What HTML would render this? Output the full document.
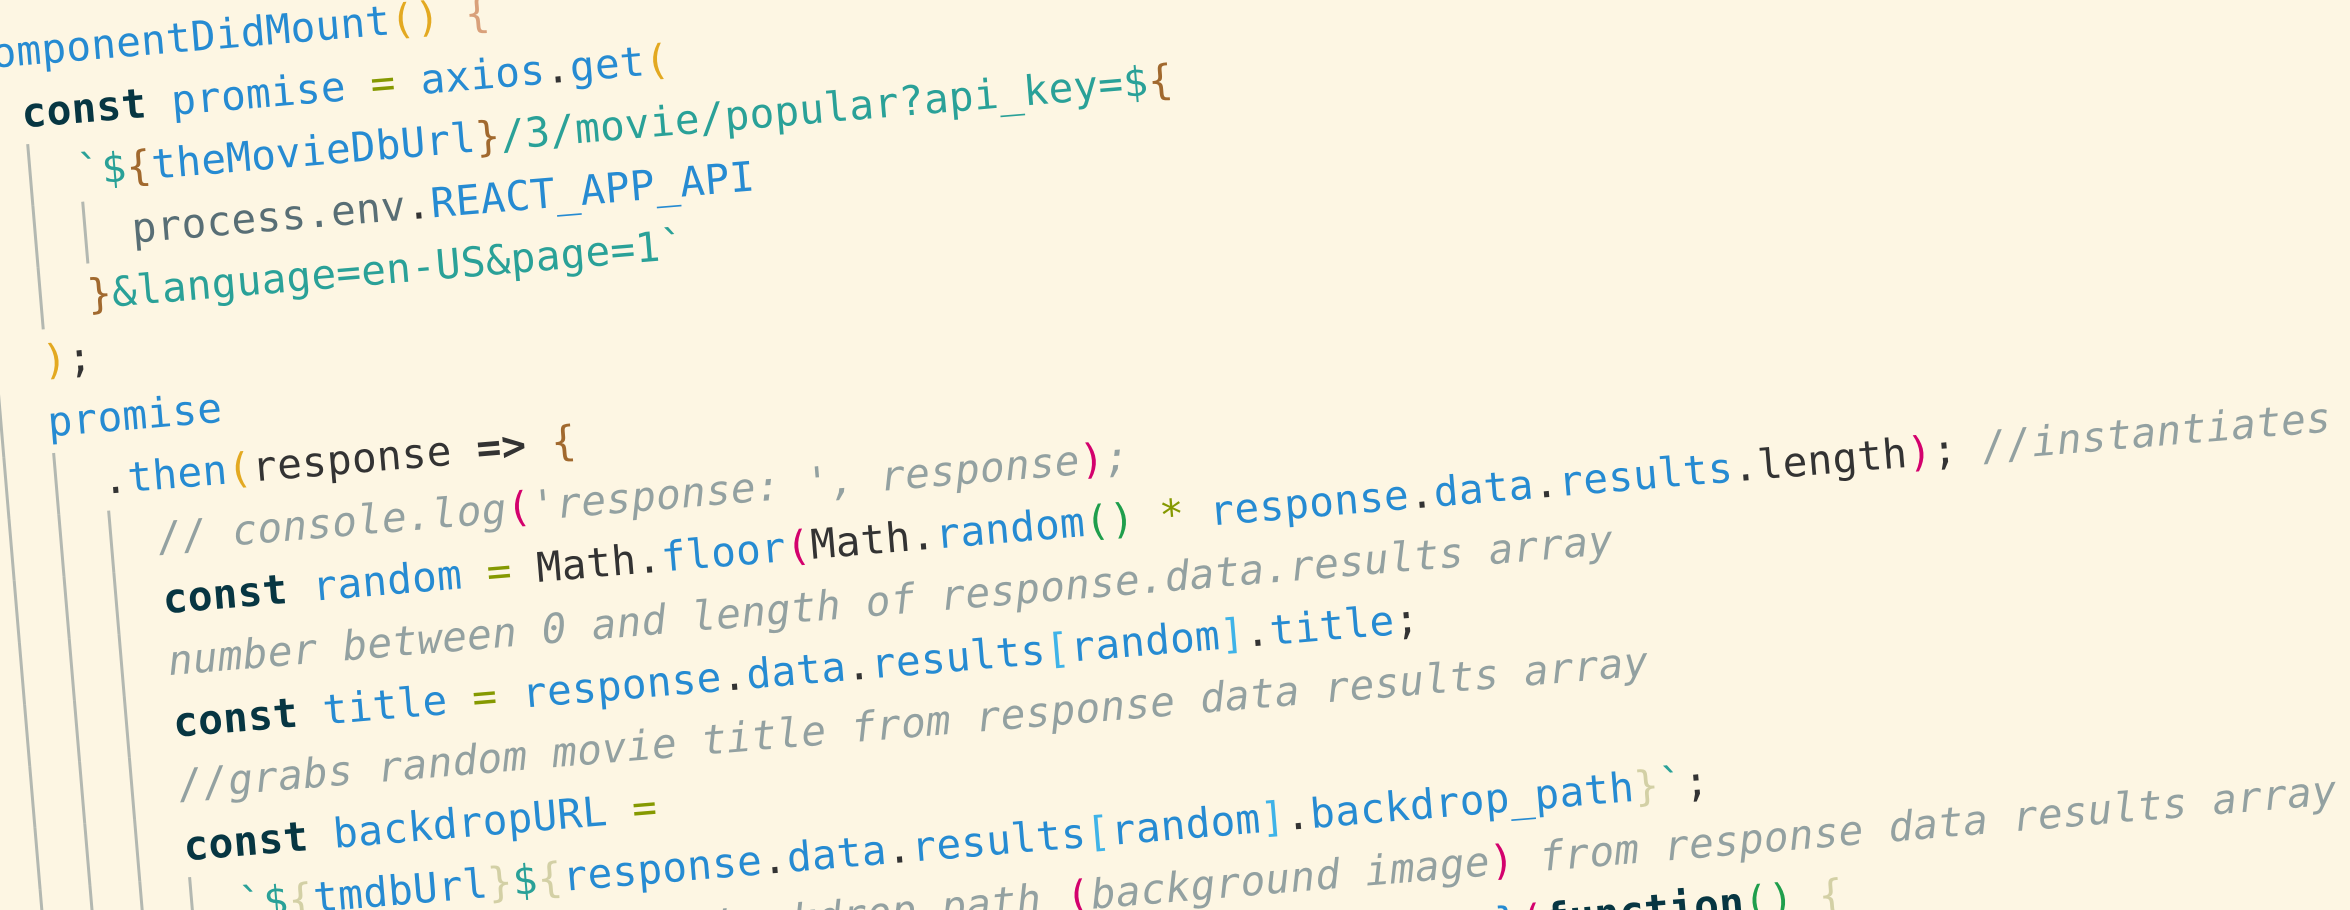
<!DOCTYPE html>
<html><head><meta charset="utf-8">
<style>
html,body{margin:0;padding:0;width:2350px;height:910px;overflow:hidden;background:#fdf6e3;}
#wrap{position:relative;width:2350px;height:910px;overflow:hidden;background:#fdf6e3;}
#code{position:absolute;left:-36px;top:25px;transform:rotate(-4.8deg);transform-origin:0 0;
font-family:"DejaVu Sans Mono","Liberation Mono",monospace;font-size:41px;letter-spacing:0.32px;line-height:62px;color:#333;}
.l{position:relative;height:62px;white-space:pre;}
.gd{position:absolute;top:0;width:3px;height:62px;background:#b3b8b1;}
.k{color:#073642;font-weight:bold}
.b{color:#268bd2}
.g{color:#859900}
.s{color:#2aa198}
.c{color:#93a1a1;font-style:italic}
.d{color:#333}
.db{color:#333;font-weight:bold}
.p1{color:#e3a921}
.p2{color:#d3016d}
.p3{color:#1f9e4c}
.br{color:#a1692e}
.lb{color:#d9a07a}
.kh{color:#d3d0a5}
.sq{color:#3fb3e8}
.gr{color:#586e75}
</style></head><body>
<div id="wrap">
<div id="code">
<div class="l"><span class="b">componentDidMount</span><span class="p1">()</span> <span class="lb">{</span></div>
<div class="l"><span class="gd" style="left:2px"></span>  <span class="k">const</span> <span class="b">promise</span> <span class="g">=</span> <span class="b">axios</span><span class="d">.</span><span class="b">get</span><span class="p1">(</span></div>
<div class="l"><span class="gd" style="left:2px"></span><span class="gd" style="left:52px"></span>    <span class="s">`$</span><span class="br">{</span><span class="b">theMovieDbUrl</span><span class="br">}</span><span class="s">/3/movie/popular?api_key=$</span><span class="br">{</span></div>
<div class="l"><span class="gd" style="left:2px"></span><span class="gd" style="left:52px"></span><span class="gd" style="left:102px"></span>      <span class="gr">process.env</span><span class="d">.</span><span class="b">REACT_APP_API</span></div>
<div class="l"><span class="gd" style="left:2px"></span><span class="gd" style="left:52px"></span>    <span class="br">}</span><span class="s">&amp;language=en-US&amp;page=1`</span></div>
<div class="l"><span class="gd" style="left:2px"></span>  <span class="p1">)</span><span class="d">;</span></div>
<div class="l"><span class="gd" style="left:2px"></span>  <span class="b">promise</span></div>
<div class="l"><span class="gd" style="left:2px"></span><span class="gd" style="left:52px"></span>    <span class="d">.</span><span class="b">then</span><span class="p1">(</span><span class="d">response</span> <span class="db">=&gt;</span> <span class="br">{</span></div>
<div class="l"><span class="gd" style="left:2px"></span><span class="gd" style="left:52px"></span><span class="gd" style="left:102px"></span>      <span class="c">// console.log</span><span class="p2">(</span><span class="c">'response: ', response</span><span class="p2">)</span><span class="c">;</span></div>
<div class="l"><span class="gd" style="left:2px"></span><span class="gd" style="left:52px"></span><span class="gd" style="left:102px"></span>      <span class="k">const</span> <span class="b">random</span> <span class="g">=</span> <span class="d">Math.</span><span class="b">floor</span><span class="p2">(</span><span class="d">Math.</span><span class="b">random</span><span class="p3">()</span> <span class="g">*</span> <span class="b">response</span><span class="d">.</span><span class="b">data</span><span class="d">.</span><span class="b">results</span><span class="d">.length</span><span class="p2">)</span><span class="d">;</span> <span class="c">//instantiates</span></div>
<div class="l"><span class="gd" style="left:2px"></span><span class="gd" style="left:52px"></span><span class="gd" style="left:102px"></span>      <span class="c">number between 0 and length of response.data.results array</span></div>
<div class="l"><span class="gd" style="left:2px"></span><span class="gd" style="left:52px"></span><span class="gd" style="left:102px"></span>      <span class="k">const</span> <span class="b">title</span> <span class="g">=</span> <span class="b">response</span><span class="d">.</span><span class="b">data</span><span class="d">.</span><span class="b">results</span><span class="sq">[</span><span class="b">random</span><span class="sq">]</span><span class="d">.</span><span class="b">title</span><span class="d">;</span></div>
<div class="l"><span class="gd" style="left:2px"></span><span class="gd" style="left:52px"></span><span class="gd" style="left:102px"></span>      <span class="c">//grabs random movie title from response data results array</span></div>
<div class="l"><span class="gd" style="left:2px"></span><span class="gd" style="left:52px"></span><span class="gd" style="left:102px"></span>      <span class="k">const</span> <span class="b">backdropURL</span> <span class="g">=</span></div>
<div class="l"><span class="gd" style="left:2px"></span><span class="gd" style="left:52px"></span><span class="gd" style="left:102px"></span><span class="gd" style="left:152px"></span>        <span class="s">`$</span><span class="kh">{</span><span class="b">tmdbUrl</span><span class="kh">}</span><span class="s">$</span><span class="kh">{</span><span class="b">response</span><span class="d">.</span><span class="b">data</span><span class="d">.</span><span class="b">results</span><span class="sq">[</span><span class="b">random</span><span class="sq">]</span><span class="d">.</span><span class="b">backdrop_path</span><span class="kh">}</span><span class="s">`</span><span class="d">;</span></div>
<div class="l"><span class="gd" style="left:2px"></span><span class="gd" style="left:52px"></span><span class="gd" style="left:102px"></span>      <span class="c">//grabs tmdbUrl plus backdrop path </span><span class="p2">(</span><span class="c">background image</span><span class="p2">)</span><span class="c"> from response data results array</span></div>
<div class="l"><span class="gd" style="left:2px"></span><span class="gd" style="left:52px"></span><span class="gd" style="left:102px"></span>      <span class="b">this.setState({ title: title, backdropURL: backdrop }</span><span class="p2">(</span><span class="k">function</span><span class="p3">()</span> <span class="kh">{</span></div>
</div>
</div>
</body></html>
